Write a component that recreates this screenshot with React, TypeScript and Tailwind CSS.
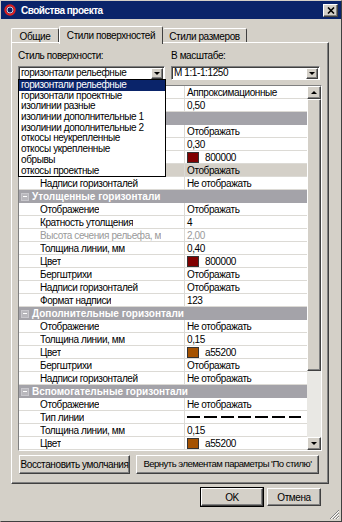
import React from "react";

type Prop = {
  label: string;
  value?: string;
  swatch?: string;
  dashed?: boolean;
  disabled?: boolean;
  selected?: boolean;
};
type Row = { category: string } | Prop;

// the first rows sit under the open list, so their names are not seen
const rows: Row[] = [
  { label: "", value: "Аппроксимационные" },
  { label: "", value: "0,50" },
  { category: "" },
  { label: "", value: "Отображать" },
  { label: "", value: "0,30" },
  { label: "", value: "800000", swatch: "#800000" },
  { label: "", value: "Отображать", selected: true },
  { label: "Надписи горизонталей", value: "Не отображать" },
  { category: "Утолщенные горизонтали" },
  { label: "Отображение", value: "Отображать" },
  { label: "Кратность утолщения", value: "4" },
  { label: "Высота сечения рельефа, м", value: "2,00", disabled: true },
  { label: "Толщина линии, мм", value: "0,40" },
  { label: "Цвет", value: "800000", swatch: "#800000" },
  { label: "Бергштрихи", value: "Отображать" },
  { label: "Надписи горизонталей", value: "Отображать" },
  { label: "Формат надписи", value: "123" },
  { category: "Дополнительные горизонтали" },
  { label: "Отображение", value: "Не отображать" },
  { label: "Толщина линии, мм", value: "0,15" },
  { label: "Цвет", value: "a55200", swatch: "#a55200" },
  { label: "Бергштрихи", value: "Отображать" },
  { label: "Надписи горизонталей", value: "Не отображать" },
  { category: "Вспомогательные горизонтали" },
  { label: "Отображение", value: "Не отображать" },
  { label: "Тип линии", dashed: true },
  { label: "Толщина линии, мм", value: "0,15" },
  { label: "Цвет", value: "a55200", swatch: "#a55200" },
];

const styles = [
  "горизонтали рельефные",
  "горизонтали проектные",
  "изолинии разные",
  "изолинии дополнительные 1",
  "изолинии дополнительные 2",
  "откосы неукрепленные",
  "откосы укрепленные",
  "обрывы",
  "откосы проектные",
];

const raised =
  "border border-t-white border-l-white border-r-[#404040] border-b-[#404040] shadow-[inset_-1px_-1px_0_#808080]";
const sunken =
  "border border-t-[#808080] border-l-[#808080] border-r-white border-b-white shadow-[inset_1px_1px_0_#404040]";

const Arrow = ({ up }: { up?: boolean }) => (
  <span
    className={
      up
        ? "h-0 w-0 border-x-[3px] border-b-[3px] border-x-transparent border-b-black"
        : "h-0 w-0 border-x-[3px] border-t-[3px] border-x-transparent border-t-black"
    }
  />
);

const ArrowButton = ({ up, className }: { up?: boolean; className: string }) => (
  <div className={`flex items-center justify-center bg-[#d4d0c8] ${raised} ${className}`}>
    <Arrow up={up} />
  </div>
);

const Combo = ({ value, className }: { value: string; className: string }) => (
  <div className={`flex h-[14px] items-center bg-white ${sunken} ${className}`}>
    <span className="flex-1 truncate pl-[2px] leading-none">{value}</span>
    <ArrowButton className="mr-[1px] h-[11px] w-[12px]" />
  </div>
);

const Button = ({ children, className }: { children: React.ReactNode; className: string }) => (
  <div
    className={`flex items-center justify-center whitespace-nowrap bg-[#d4d0c8] ${raised} ${className}`}
  >
    {children}
  </div>
);

const GridRow = ({ row }: { row: Row }) => {
  if ("category" in row) {
    return (
      <div className="flex h-[13px] shrink-0 items-center bg-[#a4a3a9] pl-[2px]">
        <span className="flex h-[8px] w-[8px] items-center justify-center border border-[#c8c7cc] bg-[#b8b7bc]">
          <span className="h-[1px] w-[4px] bg-white" />
        </span>
        {row.category && (
          <span className="ml-[3px] text-[10px] font-bold tracking-[0px] text-white">
            {row.category}
          </span>
        )}
      </div>
    );
  }
  const bg = row.selected ? "bg-[#d4d0c8]" : "bg-white";
  const fg = row.disabled ? "text-[#9a9a9a]" : "text-black";
  return (
    <div className={`flex h-[13px] shrink-0 border-b border-[#dcdad5] ${bg} ${fg}`}>
      <div className="flex w-[166px] items-center border-r border-[#dcdad5] pl-[21px]">
        {row.label && <span className="truncate">{row.label}</span>}
      </div>
      <div className="flex flex-1 items-center pl-[2px]">
        {row.swatch && (
          <span
            className="mr-[6px] h-[11px] w-[12px] border border-[#333]"
            style={{ backgroundColor: row.swatch }}
          />
        )}
        {row.dashed ? (
          <svg width="114" height="6" className="block">
            <line x1="0" y1="3" x2="114" y2="3" stroke="#000" strokeWidth="2" strokeDasharray="13 4" />
          </svg>
        ) : (
          <span>{row.value}</span>
        )}
      </div>
    </div>
  );
};

export default function App() {
  return (
    <div className="h-[522px] w-[342px] overflow-hidden bg-[#d4d0c8] font-['Liberation_Sans',Arial,sans-serif] text-[10px] tracking-[-0.4px] text-black">
      <div className="relative flex h-full flex-col border border-[#d4d0c8] border-r-[#404040] border-b-[#404040]">
        <div className="flex h-[18px] shrink-0 items-center bg-[#0a246a] pl-[3px] pr-[3px]">
          <svg width="12" height="12" viewBox="0 0 12 12">
            <circle cx="6" cy="6" r="4.6" fill="none" stroke="#e02020" strokeWidth="2.2" />
            <circle cx="6" cy="6" r="3" fill="none" stroke="#ffffff" strokeWidth="0.8" />
          </svg>
          <span className="ml-[5px] text-[10px] font-bold tracking-[-0.5px] text-white">
            Свойства проекта
          </span>
          <div className={`ml-auto flex h-[13px] w-[15px] items-center justify-center bg-[#d4d0c8] ${raised}`}>
            <svg width="8" height="7" viewBox="0 0 8 7">
              <path d="M1 0.5 L7 6.5 M7 0.5 L1 6.5" stroke="#000" strokeWidth="1.6" />
            </svg>
          </div>
        </div>

        {/* tabs */}
        <div className="ml-[10px] mt-[6px] flex h-[17px] shrink-0 items-end">
          <div className="mb-[-1px] flex h-[15px] w-[48px] items-center justify-center rounded-t-[2px] border-l border-t border-r border-l-white border-t-white border-r-[#404040]">
            Общие
          </div>
          <div className="relative z-10 mb-[-2px] flex h-[18px] w-[104px] items-center justify-center rounded-t-[2px] border-l border-t border-r border-l-white border-t-white border-r-[#404040] bg-[#d4d0c8]">
            Стили поверхностей
          </div>
          <div className="mb-[-1px] flex h-[15px] w-[84px] items-center justify-center rounded-t-[2px] border-t border-r border-t-white border-r-[#404040]">
            Стили размеров
          </div>
        </div>

        {/* panel */}
        <div className="relative ml-[10px] flex h-[442px] w-[318px] shrink-0 flex-col border border-t-white border-l-white border-r-[#404040] border-b-[#404040] px-[6px] pt-[6px] shadow-[inset_-1px_-1px_0_#808080]">
          <div className="flex h-[12px] items-center">
            <span className="w-[153px]">Стиль поверхности:</span>
            <span>В масштабе:</span>
          </div>
          <div className="mt-[5px] flex gap-[6px]">
            <Combo value="горизонтали рельефные" className="w-[147px]" />
            <Combo value="М 1:1-1:1250" className="w-[149px]" />
          </div>

          {/* property grid */}
          <div className={`mt-[5px] flex h-[366px] bg-white ${sunken}`}>
            <div className="flex flex-1 flex-col overflow-hidden">
              {rows.map((row, i) => (
                <GridRow key={i} row={row} />
              ))}
            </div>
            <div className="flex w-[14px] flex-col bg-[#e9e8e4]">
              <ArrowButton up className="h-[13px] w-[14px] shrink-0" />
              <div className={`h-[272px] shrink-0 bg-[#d4d0c8] ${raised}`} />
              <div className="flex-1" />
              <ArrowButton className="h-[13px] w-[14px] shrink-0" />
            </div>
          </div>

          <div className="mt-[4px] flex gap-[6px] pl-[1px]">
            <Button className="h-[19px] w-[111px]">Восстановить умолчания</Button>
            <Button className="h-[19px] w-[183px] text-[9.5px] tracking-[-0.5px]">
              Вернуть элементам параметры 'По стилю'
            </Button>
          </div>

          {/* open dropdown list */}
          <div className="absolute left-[6px] top-[36px] z-20 w-[148px] border border-black bg-white">
            {styles.map((s, i) => (
              <div
                key={s}
                className={`h-[10.7px] pl-[2px] leading-[10.7px] ${i === 0 ? "bg-[#0a246a] text-white" : ""}`}
              >
                {s}
              </div>
            ))}
          </div>
        </div>

        <div className="mt-[4px] flex justify-end gap-[4px] pr-[20px]">
          <Button className="h-[18px] w-[62px] outline outline-1 outline-black">OK</Button>
          <Button className="h-[18px] w-[54px]">Отмена</Button>
        </div>

        <svg width="11" height="11" viewBox="0 0 11 11" className="absolute bottom-[1px] right-[1px]">
          <path d="M10 1 L1 10 M10 4 L4 10 M10 7 L7 10" stroke="#808080" strokeWidth="1" />
          <path d="M10 2 L2 10 M10 5 L5 10 M10 8 L8 10" stroke="#ffffff" strokeWidth="1" />
        </svg>
      </div>
    </div>
  );
}
